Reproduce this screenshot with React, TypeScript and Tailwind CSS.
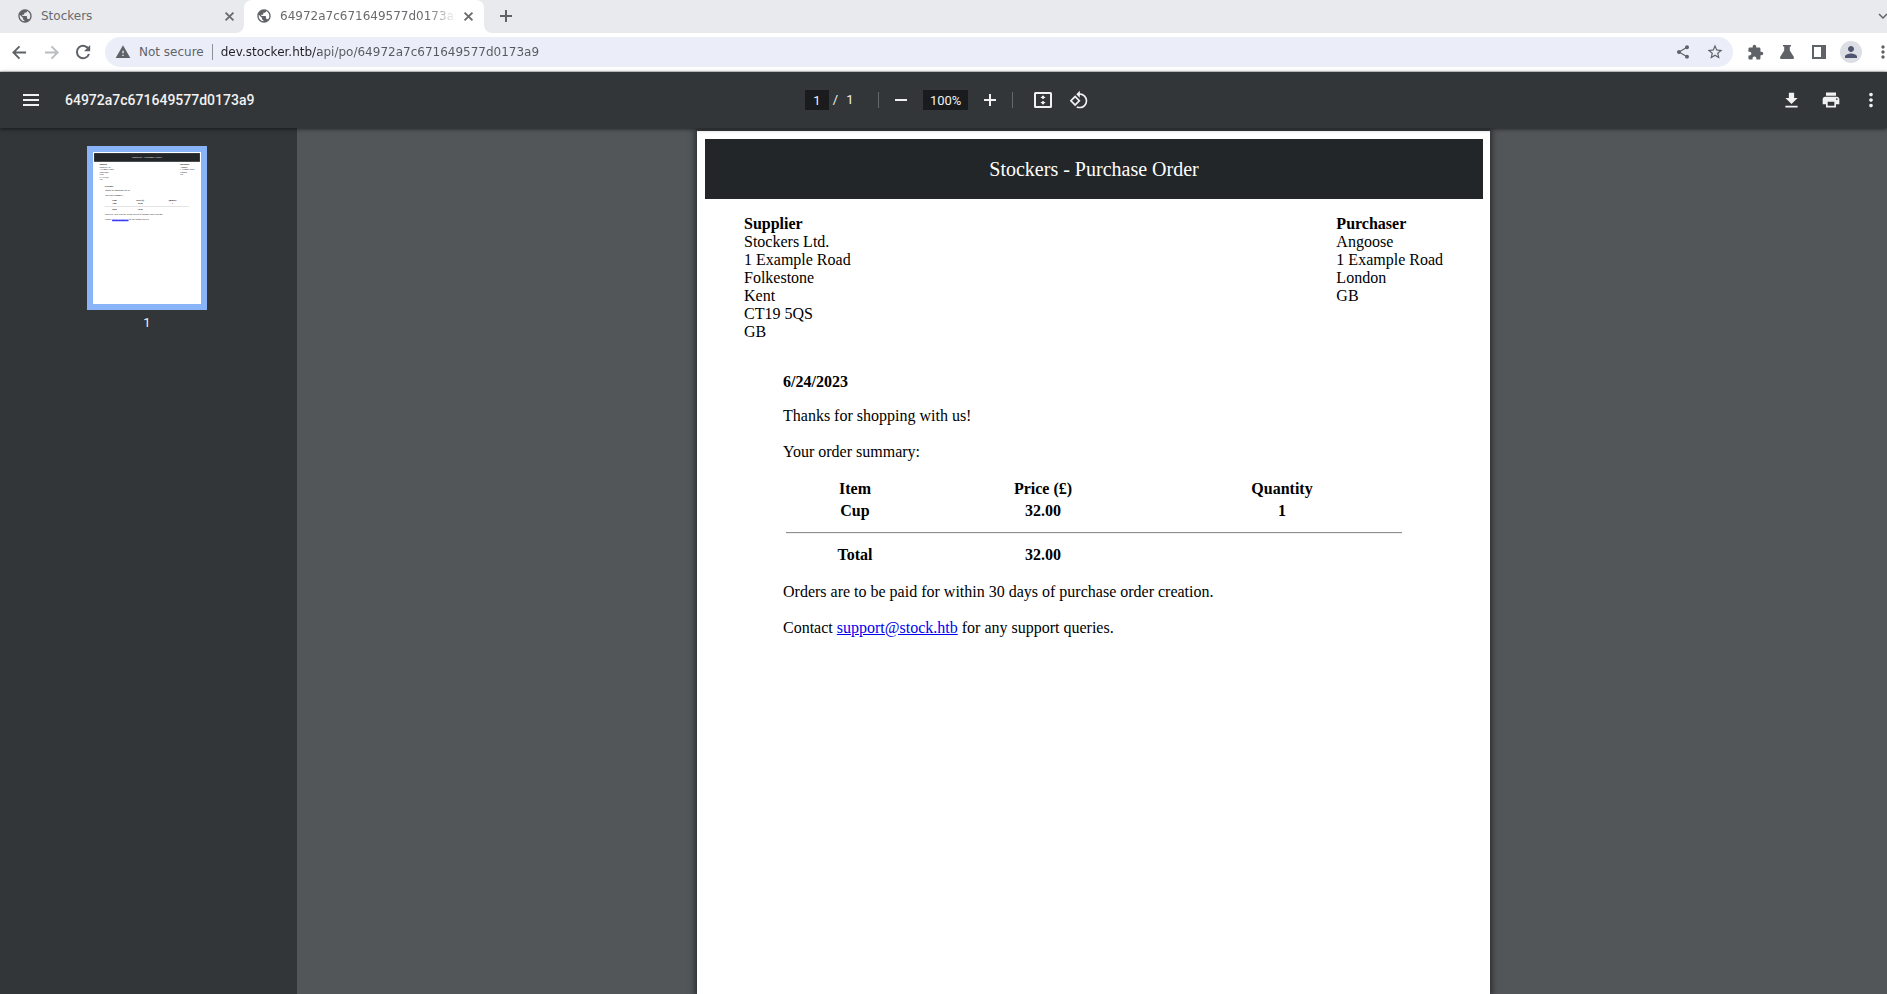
import type { ReactNode } from "react";
import {
  MdExpandMore,
  MdExtension,
  MdFileDownload,
  MdMoreVert,
  MdPerson,
  MdPrint,
  MdPublic,
  MdRotate90DegreesCcw,
  MdShare,
  MdStarBorder,
  MdWarning,
} from "react-icons/md";

const FILE_NAME = "64972a7c671649577d0173a9";
const SUPPLIER = ["Stockers Ltd.", "1 Example Road", "Folkestone", "Kent", "CT19 5QS", "GB"];
const PURCHASER = ["Angoose", "1 Example Road", "London", "GB"];

const STROKES = {
  back: "M15 8H2M8 1.500 1.500 8 8 14.500",
  forward: "M1 8h13M8 1.500 14.500 8 8 14.500",
  close: "M3.800 3.800l8.400 8.400M12.200 3.800l-8.400 8.400",
  plus: "M8 2v12M2 8h12",
  minus: "M2 8h12",
};

function StrokeIcon({ name, size }: { name: keyof typeof STROKES; size: number }) {
  return (
    <svg width={size} height={size} viewBox="0 0 16 16" fill="none" stroke="currentColor" strokeWidth="2" aria-hidden="true">
      <path d={STROKES[name]} />
    </svg>
  );
}

function IconButton({ label, className = "", children }: { label: string; className?: string; children: ReactNode }) {
  return (
    <button type="button" aria-label={label} className={`flex h-8 w-8 shrink-0 items-center justify-center ${className}`}>
      {children}
    </button>
  );
}

function TabStrip() {
  return (
    <div className="flex h-[33px] items-stretch overflow-hidden bg-[#e8eaed] text-xs text-[#6a6b6e]">
      <div className="flex w-[244px] shrink-0 items-center pr-[7px] pb-px pl-[17px]">
        <MdPublic size={16} className="shrink-0 text-[#5f6368]" />
        <span className="flex-1 overflow-hidden pl-2 whitespace-nowrap">Stockers</span>
        <button type="button" aria-label="Close Stockers" className="flex w-4 justify-center">
          <StrokeIcon name="close" size={15} />
        </button>
      </div>
      <div className="relative flex w-[240px] shrink-0 items-center rounded-t-lg bg-white pr-2 pb-px pl-3">
        <svg className="absolute bottom-0 -left-2 text-white" width="8" height="8" viewBox="0 0 8 8" aria-hidden="true">
          <path d="M8 0v8H0a8 8 0 0 0 8-8z" fill="currentColor" />
        </svg>
        <svg className="absolute -right-2 bottom-0 text-white" width="8" height="8" viewBox="0 0 8 8" aria-hidden="true">
          <path d="M0 0v8h8a8 8 0 0 1-8-8z" fill="currentColor" />
        </svg>
        <MdPublic size={16} className="shrink-0 text-[#5f6368]" />
        <span className="ml-2 flex-1 overflow-hidden [mask-image:linear-gradient(to_right,black_82%,transparent_98%)] whitespace-nowrap">
          {FILE_NAME}
        </span>
        <button type="button" aria-label="Close current tab" className="flex w-4 justify-center">
          <StrokeIcon name="close" size={15} />
        </button>
      </div>
      <IconButton label="New tab" className="ml-1.5 text-[#5f6368]">
        <StrokeIcon name="plus" size={16} />
      </IconButton>
      <IconButton label="Search tabs" className="-mr-3 ml-auto text-[#5f6368]">
        <MdExpandMore size={18} />
      </IconButton>
    </div>
  );
}

function AddressBar() {
  return (
    <div className="flex h-[39px] items-center overflow-hidden border-b border-[#d5d7da] bg-white pl-[3px] text-[#5f6368]">
      <IconButton label="Back">
        <StrokeIcon name="back" size={15} />
      </IconButton>
      <IconButton label="Forward" className="text-[#babcbe]">
        <StrokeIcon name="forward" size={15} />
      </IconButton>
      <IconButton label="Reload">
        <svg width="16" height="16" viewBox="0 0 16 16" aria-hidden="true">
          <path d="M13.700 5.300A6.200 6.200 0 1 0 14 10" fill="none" stroke="currentColor" strokeWidth="2" />
          <path d="M15.200 1v6.200H9z" fill="currentColor" />
        </svg>
      </IconButton>
      <div className="ml-1.5 flex h-[30px] flex-1 items-center rounded-full bg-[#ebeef8] pr-0.5 pl-2.5 text-xs">
        <MdWarning size={16} className="shrink-0" />
        <span className="ml-2">Not secure</span>
        <span className="mx-2 h-4 w-px bg-[#8e9196]" />
        <input
          aria-label="Address"
          className="h-5 flex-1 bg-[linear-gradient(to_right,#202124_98px,#55585c_98px)] bg-clip-text text-transparent outline-none"
          defaultValue={`dev.stocker.htb/api/po/${FILE_NAME}`}
        />
        <IconButton label="Share">
          <MdShare size={16} />
        </IconButton>
        <IconButton label="Bookmark">
          <MdStarBorder size={18} />
        </IconButton>
      </div>
      <div className="-mr-3 ml-1.5 flex">
        <IconButton label="Extensions">
          <MdExtension size={17} />
        </IconButton>
        <IconButton label="Labs">
          <svg width="14" height="14" viewBox="0 0 14 14" fill="currentColor" aria-hidden="true">
            <path d="M3 0h8v1.4H9.8v4.1L13.9 12q.4 2-1.2 2H1.3Q-.3 14 .1 12L4.2 5.5V1.4H3z" />
          </svg>
        </IconButton>
        <IconButton label="Side panel">
          <svg width="14" height="14" viewBox="0 0 14 14" aria-hidden="true">
            <path d="M0 0h14v14H0zM2 2v10h7V2z" fill="currentColor" fillRule="evenodd" />
          </svg>
        </IconButton>
        <IconButton label="Profile">
          <span className="flex h-[22px] w-[22px] items-center justify-center rounded-full bg-[#dcdee3] text-[#4f5470]">
            <MdPerson size={18} />
          </span>
        </IconButton>
        <IconButton label="Menu">
          <MdMoreVert size={20} />
        </IconButton>
      </div>
    </div>
  );
}

function ViewerToolbar() {
  return (
    <div className="relative z-10 flex h-14 items-center bg-[#323639] font-['Roboto',sans-serif] text-[#f1f1f1] shadow-[0_1px_4px_rgba(0,0,0,0.6)]">
      <div className="flex flex-1 items-center pl-[15px]">
        <IconButton label="Toggle sidebar">
          <svg width="16" height="12" viewBox="0 0 16 12" fill="currentColor" aria-hidden="true">
            <path d="M0 0h16v2H0zM0 5h16v2H0zM0 10h16v2H0z" />
          </svg>
        </IconButton>
        <h1 className="ml-[18px] text-sm font-medium">{FILE_NAME}</h1>
      </div>
      <div className="flex items-center pr-0.5 text-[13px]">
        <input
          aria-label="Page number"
          defaultValue="1"
          className="h-5 w-6 bg-[#191b1c] text-center outline-none"
        />
        <span className="ml-1">/</span>
        <span className="ml-2 w-3">1</span>
        <span className="ml-5 h-4 w-px bg-[#64686b]" />
        <IconButton label="Zoom out" className="ml-1.5">
          <StrokeIcon name="minus" size={16} />
        </IconButton>
        <input
          aria-label="Zoom"
          defaultValue="100%"
          className="ml-1.5 h-5 w-[45px] bg-[#191b1c] text-center outline-none"
        />
        <IconButton label="Zoom in" className="ml-1.5">
          <StrokeIcon name="plus" size={16} />
        </IconButton>
        <span className="ml-1.5 h-4 w-px bg-[#64686b]" />
        <IconButton label="Fit to page" className="ml-3.5">
          <svg width="18" height="16" viewBox="0 0 18 16" fill="currentColor" aria-hidden="true">
            <path
              d="M1.5 0h15A1.5 1.5 0 0 1 18 1.5v13a1.5 1.5 0 0 1-1.5 1.5h-15A1.5 1.5 0 0 1 0 14.5v-13A1.5 1.5 0 0 1 1.5 0zM2 2v12h14V2z"
              fillRule="evenodd"
            />
            <path d="M9 3.2 6.4 6h5.200zM8.2 6h1.600v1H8.200zM9 12.8 6.4 10h5.200zM8.2 9h1.600v1H8.200z" />
          </svg>
        </IconButton>
        <IconButton label="Rotate counterclockwise" className="ml-1">
          <MdRotate90DegreesCcw size={20} />
        </IconButton>
      </div>
      <div className="flex flex-1 items-center justify-end gap-2">
        <IconButton label="Download">
          <MdFileDownload size={21} />
        </IconButton>
        <IconButton label="Print">
          <MdPrint size={20} />
        </IconButton>
        <IconButton label="More actions">
          <MdMoreVert size={22} />
        </IconButton>
      </div>
    </div>
  );
}

function PagePreview() {
  return (
    <svg
      className="h-[152px] w-[108px] bg-white"
      viewBox="0 0 793 1116"
      fontFamily="Liberation Serif, serif"
      fontSize="16"
      aria-hidden="true"
    >
      <rect x="8" y="8" width="777" height="64" fill="#222628" />
      <text x="396" y="45" fontSize="21" fill="#fff" textAnchor="middle">
        Stockers - Purchase Order
      </text>
      <text x="47" y="98" fontWeight="bold">
        Supplier
      </text>
      {SUPPLIER.map((line, i) => (
        <text key={line} x="47" y={116 + i * 18}>
          {line}
        </text>
      ))}
      <text x="639" y="98" fontWeight="bold">
        Purchaser
      </text>
      {PURCHASER.map((line, i) => (
        <text key={line} x="639" y={116 + i * 18}>
          {line}
        </text>
      ))}
      <g fontWeight="bold">
        <text x="86" y="256">6/24/2023</text>
        <g textAnchor="middle">
          <text x="158" y="363">Item</text>
          <text x="346" y="363">Price (£)</text>
          <text x="584" y="363">Quantity</text>
          <text x="158" y="385">Cup</text>
          <text x="346" y="385">32.00</text>
          <text x="584" y="385">1</text>
          <text x="158" y="429">Total</text>
          <text x="346" y="429">32.00</text>
        </g>
      </g>
      <rect x="86" y="400" width="618" height="2" fill="#999" />
      <text x="86" y="290">Thanks for shopping with us!</text>
      <text x="86" y="326">Your order summary:</text>
      <text x="86" y="466">Orders are to be paid for within 30 days of purchase order creation.</text>
      <text x="86" y="502">
        Contact <tspan fill="#0000ee">support@stock.htb</tspan> for any support queries.
      </text>
      <rect x="140" y="501" width="121" height="7" fill="#0000ee" />
    </svg>
  );
}

function Sidebar() {
  return (
    <aside className="flex w-[297px] shrink-0 flex-col items-center bg-[#323639] pt-[18px] pr-[3px] font-['Roboto',sans-serif] text-[13px] text-[#f1f1f1]">
      <button type="button" aria-label="Go to page 1" className="border-6 border-[#8ab4f8]">
        <PagePreview />
      </button>
      <span className="mt-[5px] leading-4">1</span>
    </aside>
  );
}

function Party({ title, lines }: { title: string; lines: string[] }) {
  return (
    <address className="not-italic">
      <strong className="block">{title}</strong>
      {lines.map((line) => (
        <span key={line} className="block">
          {line}
        </span>
      ))}
    </address>
  );
}

function PurchaseOrder() {
  return (
    <article className="w-[793px] shrink-0 bg-white pt-2 pr-[7px] pl-2 font-['Liberation_Serif',serif] text-base leading-[18px] text-black shadow-[0_0_6px_2px_rgba(0,0,0,0.5)]">
      <header className="flex h-[60px] items-center justify-center bg-[#222628] text-xl text-white">
        <h2>Stockers - Purchase Order</h2>
      </header>
      <div className="flex justify-between pt-4 pr-10 pl-[39px]">
        <Party title="Supplier" lines={SUPPLIER} />
        <Party title="Purchaser" lines={PURCHASER} />
      </div>
      <div className="mt-8 px-[78px]">
        <p className="font-bold">6/24/2023</p>
        <p className="mt-4">Thanks for shopping with us!</p>
        <p className="mt-[18px]">Your order summary:</p>
        <table className="mt-4 w-full table-fixed border-separate border-spacing-0.5 text-center font-bold">
          <colgroup>
            <col className="w-[140px]" />
            <col className="w-[232px]" />
            <col />
          </colgroup>
          <thead>
            <tr>
              <th className="p-px">Item</th>
              <th className="p-px">Price (£)</th>
              <th className="p-px">Quantity</th>
            </tr>
          </thead>
          <tbody>
            <tr>
              <td className="p-px">Cup</td>
              <td className="p-px">32.00</td>
              <td className="p-px">1</td>
            </tr>
            <tr>
              <td colSpan={3} className="p-px">
                <hr className="my-2 h-0.5 border-0 border-t border-[#8f8f8f] bg-[#eeeeee]" />
              </td>
            </tr>
          </tbody>
          <tfoot>
            <tr>
              <th className="p-px">Total</th>
              <td className="p-px">32.00</td>
              <td className="p-px" />
            </tr>
          </tfoot>
        </table>
        <p className="mt-4">Orders are to be paid for within 30 days of purchase order creation.</p>
        <p className="mt-[18px]">
          Contact{" "}
          <a href="mailto:support@stock.htb" className="text-[#0000ee] underline">
            support@stock.htb
          </a>{" "}
          for any support queries.
        </p>
      </div>
    </article>
  );
}

export default function App() {
  return (
    <div className="flex h-screen flex-col overflow-hidden bg-[#525659] font-['DejaVu_Sans',sans-serif]">
      <TabStrip />
      <AddressBar />
      <ViewerToolbar />
      <div className="flex min-h-0 flex-1">
        <Sidebar />
        <main className="flex flex-1 justify-center overflow-hidden pt-[3px] pl-[3px]">
          <PurchaseOrder />
        </main>
      </div>
    </div>
  );
}
